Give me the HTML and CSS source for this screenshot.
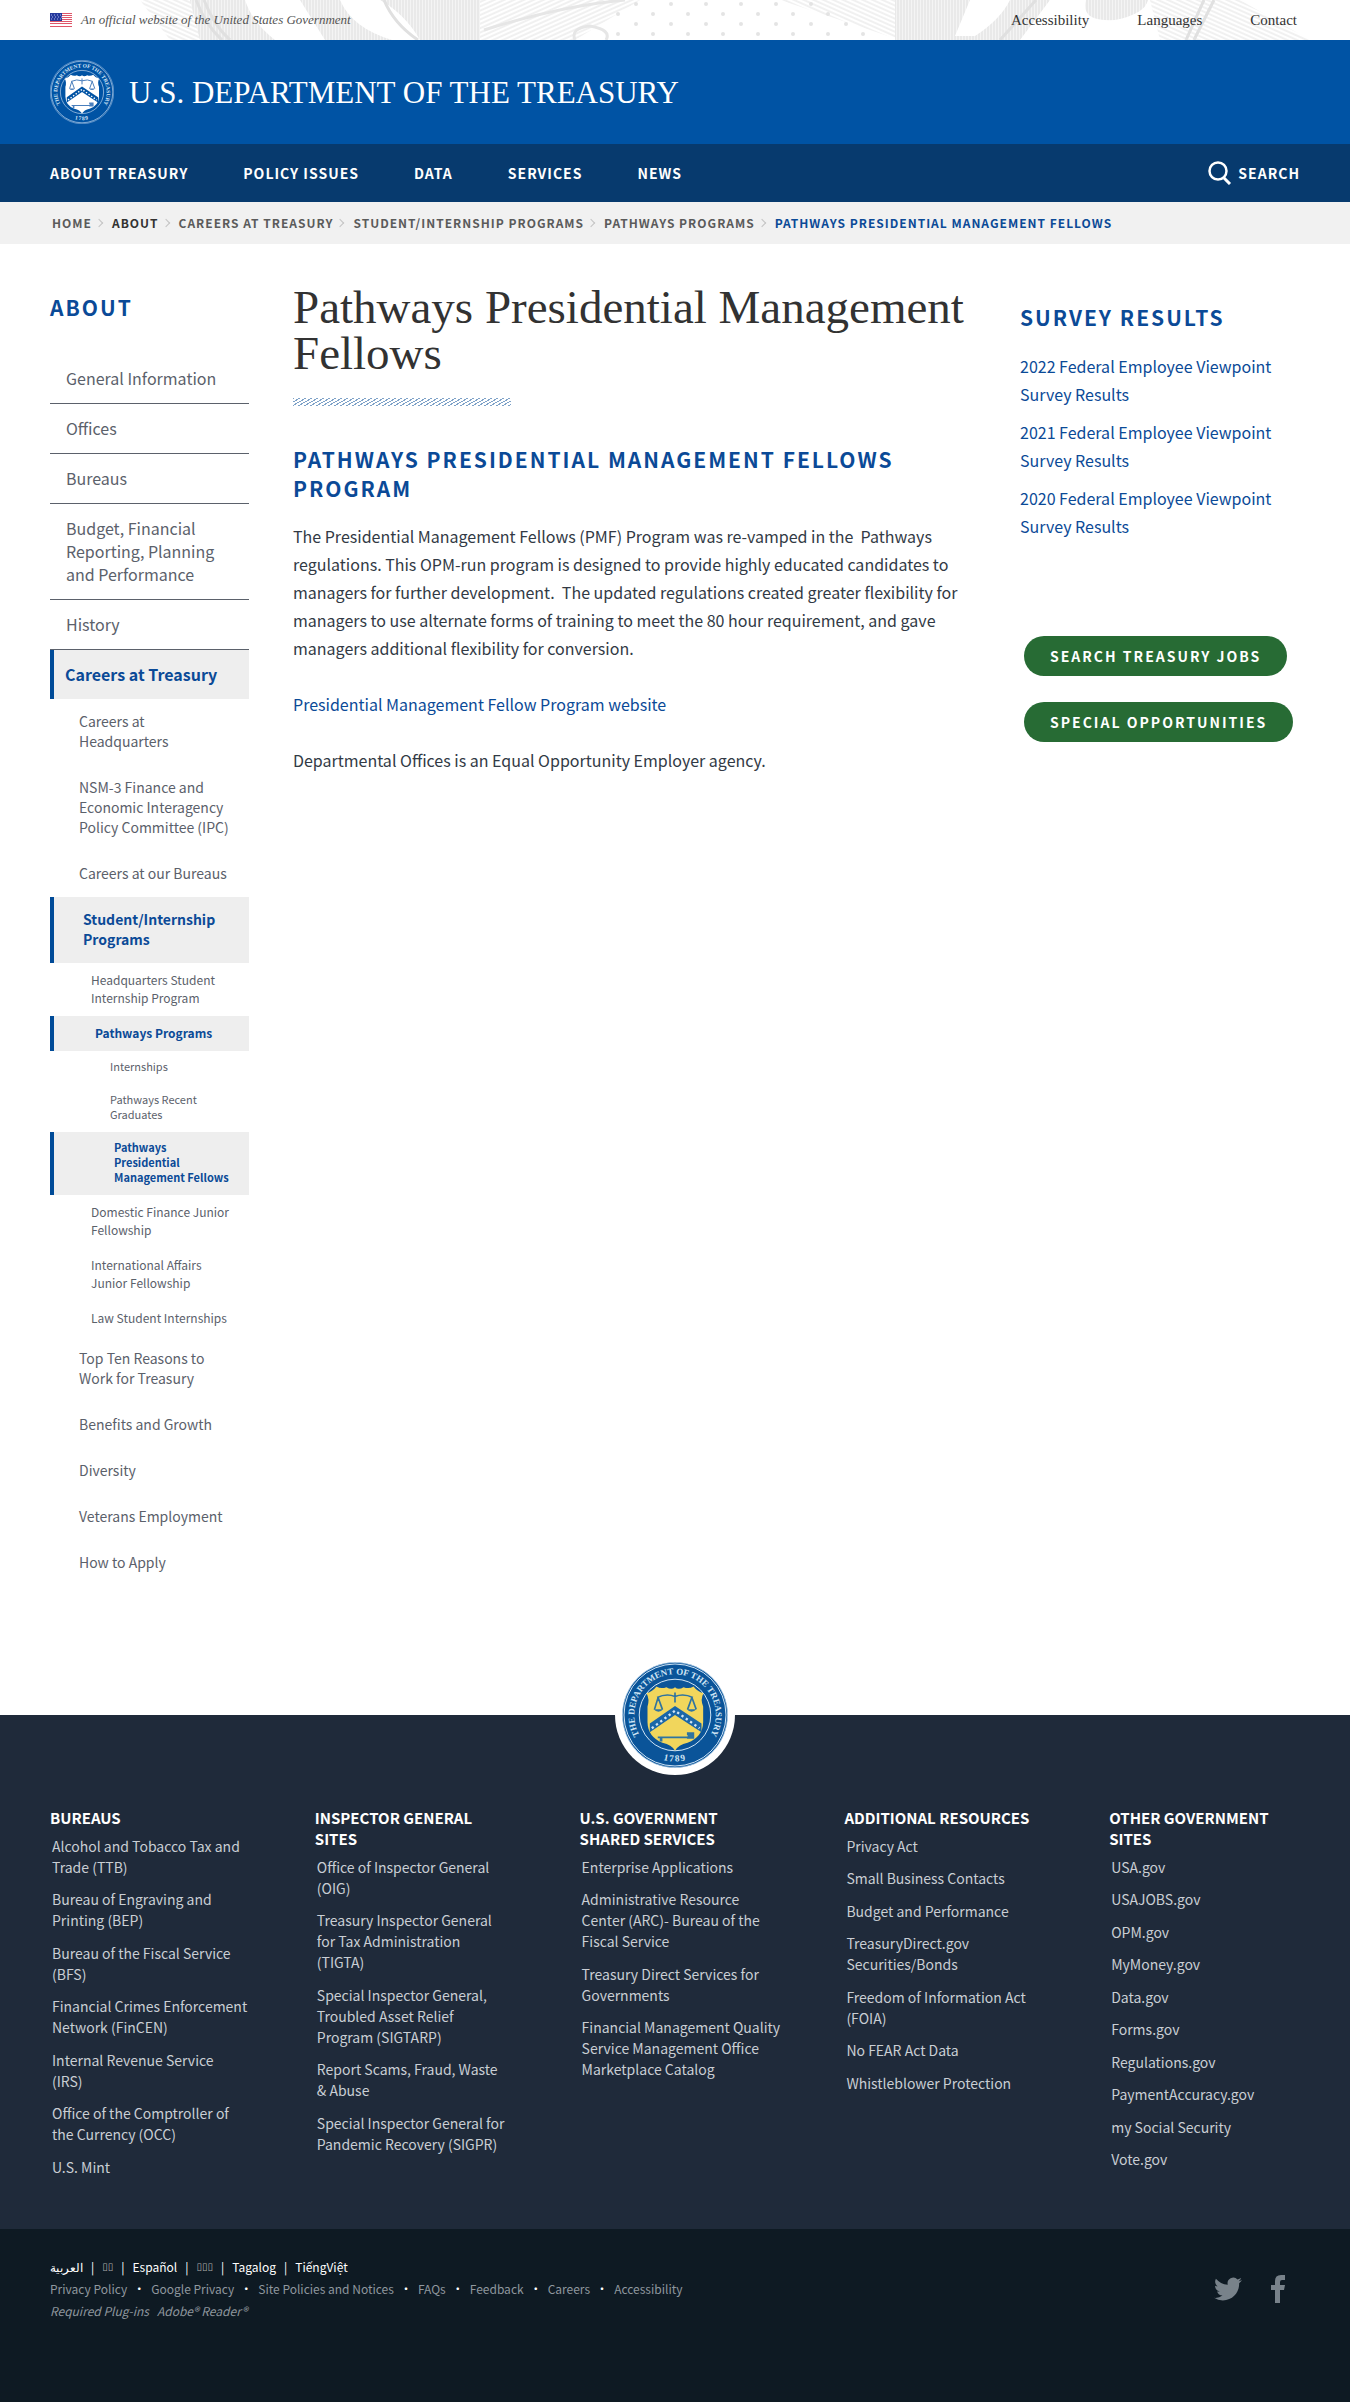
FILE: index.html
```html
<!DOCTYPE html>
<html lang="en">
<head>
<meta charset="utf-8">
<meta name="viewport" content="width=device-width, initial-scale=1">
<title>Pathways Presidential Management Fellows | U.S. Department of the Treasury</title>
<link rel="stylesheet" href="styles.css">
</head>
<body>
<svg class="defs" width="0" height="0" aria-hidden="true">
  <symbol id="seal" viewBox="0 0 320 320">
    <circle class="seal-disc" cx="160" cy="160" r="159"/>
    <circle class="seal-ring" cx="160" cy="160" r="154"/>
    <circle class="seal-ring" cx="160" cy="160" r="108"/>
    <path id="seal-arc" fill="none" d="M52 219A123 123 0 1 1 268 219"/>
    <path id="seal-base" fill="none" d="M98 286A140 140 0 0 0 222 286"/>
    <text class="seal-text" font-size="27"><textPath href="#seal-arc" startOffset="50%" text-anchor="middle">THE DEPARTMENT OF THE TREASURY</textPath></text>
    <text class="seal-text" font-size="28" letter-spacing="4"><textPath href="#seal-base" startOffset="50%" text-anchor="middle">1789</textPath></text>
    <path class="seal-shield" d="M74 94Q92 90 104 74Q118 82 134 76Q150 86 160 76Q170 86 186 76Q202 82 216 74Q228 90 246 94Q236 112 245 134V182Q244 226 198 244Q170 250 160 268Q150 250 122 244Q78 226 77 182V134Q84 112 74 94Z"/>
    <path class="seal-chevron" d="M160 133L84 186V212L160 160L240 212V186Z"/>
    <path class="seal-dots" d="M90 200L160 147L234 200"/>
    <path class="seal-tool" d="M106 107Q134 94 160 104Q186 94 214 107M160 92V122M109 107L98 143M109 107L122 143M211 107L198 143M211 107L224 143"/>
    <path class="seal-pan" d="M95 143H125Q110 158 95 143ZM195 143H225Q210 158 195 143ZM108 225H198V220H196V212H218V232H196V230H122V240H114V230H108Z"/>
  </symbol>
</svg>

<div class="topbar">
  <svg class="engraving" viewBox="0 0 1350 40" preserveAspectRatio="xMidYMid slice" aria-hidden="true">
    <defs>
      <pattern id="vert" width="3" height="3" patternUnits="userSpaceOnUse"><path d="M1 0V3" stroke="#dedede"/></pattern>
      <pattern id="diag" width="4" height="4" patternUnits="userSpaceOnUse" patternTransform="rotate(24)"><path d="M0 1H4" stroke="#e2e2e2"/></pattern>
      <pattern id="diagr" width="4" height="4" patternUnits="userSpaceOnUse" patternTransform="rotate(-24)"><path d="M0 1H4" stroke="#e2e2e2"/></pattern>
      <pattern id="stars" width="35" height="20" patternUnits="userSpaceOnUse"><circle cx="6" cy="4" r="2" fill="#e4e4e4"/><circle cx="23" cy="14" r="2" fill="#e4e4e4"/></pattern>
    </defs>
    <path fill="url(#diag)" d="M140 0H250L215 40H170Z"/>
    <path fill="#f4f4f4" d="M190 0H480V40H200Z"/>
    <path fill="url(#vert)" d="M190 0H480V40H200Z"/>
    <path fill="#fff" d="M245 0H300L325 40H275Q252 22 245 0ZM340 0H380Q405 14 420 40H392Q352 28 340 0Z"/>
    <path fill="none" stroke="#e0e0e0" stroke-width="3" d="M196 0Q206 26 222 40M204 0Q214 26 230 40M384 0Q394 24 418 40"/>
    <path fill="url(#diagr)" d="M480 0H640L575 40H480Z"/>
    <path fill="none" stroke="#e6e6e6" stroke-width="3" d="M575 40Q570 28 590 26Q612 30 606 40M484 30Q560 6 625 0"/>
    <path fill="url(#stars)" d="M610 0H820L880 40H610Z"/>
    <path fill="url(#diag)" d="M780 0H905V40H900Z"/>
    <path fill="#f4f4f4" d="M895 0H1160V40H895Z"/>
    <path fill="url(#vert)" d="M895 0H1160V40H895Z"/>
    <path fill="#fff" d="M970 0H1010Q1000 20 975 36H955ZM1050 0H1086Q1080 22 1115 20Q1145 14 1148 0H1180L1160 40H1020Z"/>
    <path fill="none" stroke="#e0e0e0" stroke-width="3" d="M1036 0L1000 40M1214 0L1194 40M1204 0L1186 40"/>
    <path fill="url(#diag)" d="M1150 0H1240L1310 40H1160Z"/>
  </svg>
  <div class="wrap topbar-row">
    <p class="official">
      <svg width="22" height="14" viewBox="0 0 22 14" aria-hidden="true"><path fill="#fff" d="M0 0H22V14H0Z"/><path stroke="#e0566a" d="M0 .5H22M0 2.500H22M0 4.500H22M0 6.500H22M0 8.500H22M0 10.500H22M0 13.500H22"/><path fill="#24389c" d="M0 0H12V8H0Z"/><path stroke="#aab4e8" stroke-dasharray="1 2" d="M1 2H12M2 4H12M1 6H12"/></svg>
      An official website of the United States Government
    </p>
    <nav class="quick" aria-label="Quick links"><a href="#">Accessibility</a><a href="#">Languages</a><a href="#">Contact</a></nav>
  </div>
</div>

<header class="masthead">
  <div class="wrap masthead-row">
    <svg class="seal seal-white" width="64" height="64" aria-hidden="true"><use href="#seal"/></svg>
    <a class="site-name" href="#">U.S. DEPARTMENT OF THE TREASURY</a>
  </div>
</header>

<nav class="mainnav" aria-label="Main">
  <div class="wrap mainnav-row">
    <a href="#">ABOUT TREASURY</a><a href="#">POLICY ISSUES</a><a href="#">DATA</a><a href="#">SERVICES</a><a href="#">NEWS</a>
    <button class="search" type="button">
      <svg width="24" height="24" viewBox="0 0 24 24" fill="none" stroke="#fff" aria-hidden="true"><circle cx="10" cy="10" r="8.500" stroke-width="2.500"/><path d="M16 17L22 23" stroke-width="3"/></svg>
      SEARCH
    </button>
  </div>
</nav>

<nav class="crumbs" aria-label="Breadcrumb">
  <ol class="wrap crumbs-row">
    <li><a href="#">HOME</a></li>
    <li><a class="dark" href="#">ABOUT</a></li>
    <li><a href="#">CAREERS AT TREASURY</a></li>
    <li><a href="#">STUDENT/INTERNSHIP PROGRAMS</a></li>
    <li><a href="#">PATHWAYS PROGRAMS</a></li>
    <li><a class="here" href="#" aria-current="page">PATHWAYS PRESIDENTIAL MANAGEMENT FELLOWS</a></li>
  </ol>
</nav>

<div class="wrap layout">
  <aside class="side">
    <h2 class="caps-title">ABOUT</h2>
    <ul class="l1">
      <li><a href="#">General Information</a></li>
      <li><a href="#">Offices</a></li>
      <li><a href="#">Bureaus</a></li>
      <li><a href="#">Budget, Financial Reporting, Planning and Performance</a></li>
      <li><a href="#">History</a></li>
      <li><a class="active" href="#">Careers at Treasury</a>
        <ul class="l2">
          <li><a href="#">Careers at Headquarters</a></li>
          <li><a href="#">NSM-3 Finance and Economic Interagency Policy Committee (IPC)</a></li>
          <li><a href="#">Careers at our Bureaus</a></li>
          <li><a class="active" href="#">Student/Internship Programs</a>
            <ul class="l3">
              <li><a href="#">Headquarters Student Internship Program</a></li>
              <li><a class="active" href="#">Pathways Programs</a>
                <ul class="l4">
                  <li><a href="#">Internships</a></li>
                  <li><a href="#">Pathways Recent Graduates</a></li>
                  <li><a class="active" href="#">Pathways Presidential Management Fellows</a></li>
                </ul>
              </li>
              <li><a href="#">Domestic Finance Junior Fellowship</a></li>
              <li><a href="#">International Affairs Junior Fellowship</a></li>
              <li><a href="#">Law Student Internships</a></li>
            </ul>
          </li>
          <li><a href="#">Top Ten Reasons to Work for Treasury</a></li>
          <li><a href="#">Benefits and Growth</a></li>
          <li><a href="#">Diversity</a></li>
          <li><a href="#">Veterans Employment</a></li>
          <li><a href="#">How to Apply</a></li>
        </ul>
      </li>
    </ul>
  </aside>

  <main class="content">
    <h1>Pathways Presidential Management Fellows</h1>
    <div class="hatch"></div>
    <h2 class="caps-title">PATHWAYS PRESIDENTIAL MANAGEMENT FELLOWS PROGRAM</h2>
    <p>The Presidential Management Fellows (PMF) Program was re-vamped in the &nbsp;Pathways regulations. This OPM-run program is designed to provide highly educated candidates to managers for further development.&nbsp; The updated regulations created greater flexibility for managers to use alternate forms of training to meet the 80 hour requirement, and gave managers additional flexibility for conversion.</p>
    <p><a href="#">Presidential Management Fellow Program website</a></p>
    <p>Departmental Offices is an Equal Opportunity Employer agency.</p>
  </main>

  <aside class="related">
    <h2 class="caps-title">SURVEY RESULTS</h2>
    <ul class="survey">
      <li><a href="#">2022 Federal Employee Viewpoint Survey Results</a></li>
      <li><a href="#">2021 Federal Employee Viewpoint Survey Results</a></li>
      <li><a href="#">2020 Federal Employee Viewpoint Survey Results</a></li>
    </ul>
    <div class="actions">
      <a class="pill" href="#">SEARCH TREASURY JOBS</a>
      <a class="pill" href="#">SPECIAL OPPORTUNITIES</a>
    </div>
  </aside>
</div>

<footer>
  <div class="foot-main">
    <div class="badge"><svg class="seal seal-color" width="106" height="106" aria-hidden="true"><use href="#seal"/></svg></div>
    <div class="wrap foot-cols">
      <section><h3>BUREAUS</h3><ul>
        <li><a href="#">Alcohol and Tobacco Tax and Trade (TTB)</a></li>
        <li><a href="#">Bureau of Engraving and Printing (BEP)</a></li>
        <li><a href="#">Bureau of the Fiscal Service (BFS)</a></li>
        <li><a href="#">Financial Crimes Enforcement Network (FinCEN)</a></li>
        <li><a href="#">Internal Revenue Service<br>(IRS)</a></li>
        <li><a href="#">Office of the Comptroller of the Currency (OCC)</a></li>
        <li><a href="#">U.S. Mint</a></li>
      </ul></section>
      <section><h3>INSPECTOR GENERAL SITES</h3><ul>
        <li><a href="#">Office of Inspector General<br>(OIG)</a></li>
        <li><a href="#">Treasury Inspector General<br>for Tax Administration<br>(TIGTA)</a></li>
        <li><a href="#">Special Inspector General,<br>Troubled Asset Relief<br>Program (SIGTARP)</a></li>
        <li><a href="#">Report Scams, Fraud, Waste<br>&amp; Abuse</a></li>
        <li><a href="#">Special Inspector General for Pandemic Recovery (SIGPR)</a></li>
      </ul></section>
      <section><h3>U.S. GOVERNMENT SHARED SERVICES</h3><ul>
        <li><a href="#">Enterprise Applications</a></li>
        <li><a href="#">Administrative Resource<br>Center (ARC)- Bureau of the Fiscal Service</a></li>
        <li><a href="#">Treasury Direct Services for Governments</a></li>
        <li><a href="#">Financial Management Quality Service Management Office<br>Marketplace Catalog</a></li>
      </ul></section>
      <section><h3>ADDITIONAL RESOURCES</h3><ul>
        <li><a href="#">Privacy Act</a></li>
        <li><a href="#">Small Business Contacts</a></li>
        <li><a href="#">Budget and Performance</a></li>
        <li><a href="#">TreasuryDirect.gov Securities/Bonds</a></li>
        <li><a href="#">Freedom of Information Act (FOIA)</a></li>
        <li><a href="#">No FEAR Act Data</a></li>
        <li><a href="#">Whistleblower Protection</a></li>
      </ul></section>
      <section><h3>OTHER GOVERNMENT SITES</h3><ul>
        <li><a href="#">USA.gov</a></li>
        <li><a href="#">USAJOBS.gov</a></li>
        <li><a href="#">OPM.gov</a></li>
        <li><a href="#">MyMoney.gov</a></li>
        <li><a href="#">Data.gov</a></li>
        <li><a href="#">Forms.gov</a></li>
        <li><a href="#">Regulations.gov</a></li>
        <li><a href="#">PaymentAccuracy.gov</a></li>
        <li><a href="#">my Social Security</a></li>
        <li><a href="#">Vote.gov</a></li>
      </ul></section>
    </div>
  </div>
  <div class="foot-bar">
    <div class="wrap foot-bar-row">
      <div class="legal">
        <p class="langs"><a href="#" lang="ar">العربية</a><i>|</i><a class="boxes" href="#">▯▯</a><i>|</i><a href="#">Español</a><i>|</i><a class="boxes" href="#">▯▯▯</a><i>|</i><a href="#">Tagalog</a><i>|</i><a href="#">TiếngViệt</a></p>
        <p class="policies"><a href="#">Privacy Policy</a><i>•</i><a href="#">Google Privacy</a><i>•</i><a href="#">Site Policies and Notices</a><i>•</i><a href="#">FAQs</a><i>•</i><a href="#">Feedback</a><i>•</i><a href="#">Careers</a><i>•</i><a href="#">Accessibility</a></p>
        <p class="plugins"><span>Required Plug-ins</span><a href="#">Adobe® Reader®</a></p>
      </div>
      <div class="social">
        <a href="#" aria-label="Twitter"><svg width="28" height="28" viewBox="0 0 24 24"><path d="M23.950 4.570a10 10 0 0 1-2.820.770 4.960 4.960 0 0 0 2.160-2.720c-.950.560-2 .960-3.130 1.180a4.920 4.920 0 0 0-8.380 4.490C7.690 8.090 4.070 6.130 1.640 3.160a4.820 4.820 0 0 0-.670 2.480c0 1.710.870 3.210 2.190 4.100a4.900 4.900 0 0 1-2.230-.620v.060a4.920 4.920 0 0 0 3.950 4.830 5 5 0 0 1-2.210.080 4.940 4.940 0 0 0 4.600 3.420A9.870 9.870 0 0 1 0 19.540a14 14 0 0 0 7.550 2.210c9.050 0 14-7.500 14-13.980 0-.210 0-.420-.020-.630a9.940 9.940 0 0 0 2.460-2.550z"/></svg></a>
        <a href="#" aria-label="Facebook"><svg width="14" height="28" viewBox="0 0 14 28"><path d="M4 28V15H0V10H4V6Q4 0 10 0H14V5H11Q9 5 9 7V10H14L13 15H9V28Z"/></svg></a>
      </div>
    </div>
  </div>
</footer>
</body>
</html>
```
FILE: styles.css
```css
* { box-sizing: border-box; }
body {
  margin: 0;
  background: #fff;
  color: #323a45;
  font: 16px/28px "Noto Sans CJK SC", "Noto Sans", sans-serif;
}
a { color: #0b4a97; text-decoration: none; }
ul, ol { list-style: none; margin: 0; padding: 0; }
h1, h2, h3, p { margin: 0; }
.defs { position: absolute; }
.wrap { padding: 0 50px; }

/* Seal */
.seal { display: block; flex: none; }
.seal-text { font-family: "Liberation Serif", serif; font-weight: bold; }
.seal-ring { fill: none; stroke-width: 3; }
.seal-dots { fill: none; stroke-width: 7; stroke-dasharray: 7 9; }
.seal-tool { fill: none; stroke-width: 5; }
.seal-white { --disc: #0053a4; --line: #d7e6f7; --shield: #fff; --mark: #0053a4; --dots: #fff; --tool: #4a7fbd; }
.seal-color { --disc: #0a5499; --line: #cfe4f5; --shield: #f1d65c; --mark: #1a66a8; --dots: #cfe4f5; --tool: #2f74a0; }
.seal-disc { fill: var(--disc); stroke: var(--line); stroke-width: 2; }
.seal-ring { stroke: var(--line); }
.seal-text { fill: var(--line); }
.seal-shield { fill: var(--shield); }
.seal-chevron { fill: var(--mark); }
.seal-dots { stroke: var(--dots); }
.seal-tool { stroke: var(--tool); }
.seal-pan { fill: var(--tool); }

/* Top bar */
.topbar { position: relative; background: #fff; font-family: "Liberation Serif", serif; }
.engraving { position: absolute; inset: 0; width: 100%; height: 100%; }
.topbar-row { position: relative; display: flex; justify-content: space-between; align-items: center; min-height: 40px; }
.official { display: flex; align-items: center; gap: 9px; font-size: 13px; line-height: 20px; font-style: italic; color: #555; }
.quick { display: flex; gap: 48px; padding-right: 3px; font-size: 15px; line-height: 20px; }
.quick a { color: #333; }

/* Masthead */
.masthead { background: #0053a4; }
.masthead-row { display: flex; align-items: center; gap: 15px; min-height: 104px; }
.site-name { padding-top: 2px; color: #fff; font: 31px/40px "Liberation Serif", serif; }

/* Main navigation */
.mainnav { background: #073a6e; }
.mainnav-row { display: flex; align-items: center; gap: 55px; min-height: 58px; font-size: 14px; font-weight: 700; letter-spacing: 1px; }
.mainnav a { color: #fff; }
.search { display: flex; align-items: center; gap: 6px; margin-left: auto; padding: 0; border: 0; background: none; color: #fff; font: inherit; letter-spacing: inherit; }

/* Breadcrumb */
.crumbs { background: #f1f1f1; }
.crumbs-row { display: flex; align-items: center; min-height: 42px; padding-left: 52px; font-size: 12px; font-weight: 700; letter-spacing: 1px; }
.crumbs li { display: flex; align-items: center; }
.crumbs li + li::before { content: ""; width: 5px; height: 5px; margin: 0 10px 0 4px; border: solid #c4c4c4; border-width: 1px 1px 0 0; transform: rotate(45deg); }
.crumbs a { color: #5b5b5b; }
.crumbs a.dark { color: #323232; }
.crumbs a.here { color: #0b4a97; }

/* Page layout */
.layout { display: grid; grid-template-columns: 199px minmax(0, 1fr) 280px; column-gap: 44px; padding-bottom: 129px; }
.content { padding-top: 40px; }
.caps-title { color: #0b4a97; font-size: 21px; line-height: 29px; font-weight: 700; letter-spacing: 2px; }

/* Section menu */
.side { padding-top: 49px; }
.side .l1 { margin-top: 32px; }
.side a { display: block; color: #5b616b; }
.side .active { border-left: 4px solid #004b98; background: #eee; color: #0b4a97; font-weight: 700; }
.l1 > li > a { padding: 13px 8px 13px 16px; font-size: 16px; line-height: 23px; }
.l1 > li + li { border-top: 1px solid #5b616b; }
.l1 > li > a.active { padding-left: 11px; }
.l2 > li > a { padding: 12px 16px 14px 29px; font-size: 14px; line-height: 20px; }
.l3 > li > a { padding: 8px 16px 9px 41px; font-size: 12px; line-height: 18px; }
.l4 > li > a { padding: 8px 16px 10px 60px; font-size: 11px; line-height: 15px; }

/* Article */
h1 { color: #323232; font: 47px/46px "Liberation Serif", serif; }
.hatch { width: 218px; height: 8px; margin: 22px 0 39px; background: repeating-linear-gradient(150deg, #7ea2c8 0 1px, #fff 1px 3px); }
.content p { margin-top: 28px; }
.content .caps-title + p { margin-top: 19px; }

/* Related */
.related { padding-top: 59px; }
.survey { display: grid; gap: 10px; margin-top: 20px; }
.actions { display: grid; gap: 26px; justify-items: start; margin: 96px 0 0 4px; }
.pill { padding: 6px 26px; border-radius: 20px; background: #276b34; color: #fff; font-size: 14px; font-weight: 700; letter-spacing: 2px; white-space: nowrap; }

/* Footer */
.foot-main { position: relative; padding: 92px 0 40px; background: #1f2a3a; }
.badge { position: absolute; top: -60px; left: 50%; display: grid; place-items: center; width: 120px; height: 120px; margin-left: -60px; border-radius: 50%; background: #fff; }
.foot-cols { display: grid; grid-template-columns: repeat(5, minmax(0, 1fr)); gap: 74px; line-height: 21px; }
.foot-cols h3 { color: #fff; font-size: 15px; font-weight: 700; }
.foot-cols ul { margin-right: -12px; padding: 8px 0 0 2px; font-size: 14px; }
.foot-cols li { margin-bottom: 11px; }
.foot-cols li:nth-child(even) { margin-bottom: 12px; }
.foot-cols a { color: #c9ced4; }
.foot-bar { background: #0e1a23; }
.foot-bar-row { display: flex; justify-content: space-between; padding-top: 27px; padding-bottom: 80px; font-size: 12px; line-height: 22px; }
.legal i { color: #fff; font-style: normal; }
.langs, .policies, .plugins { display: flex; }
.langs { gap: 8px; }
.langs a { color: #fff; }
.langs .boxes { color: #aaa; font-size: 10px; font-family: "DejaVu Sans", sans-serif; }
.policies { gap: 6px; }
.policies a { color: #8f979e; }
.plugins { gap: 8px; font-style: italic; color: #8f979e; }
.plugins a { color: inherit; }
.social { display: flex; gap: 29px; padding: 19px 15px 0 0; }
.social svg { display: block; fill: #78828a; }
```
